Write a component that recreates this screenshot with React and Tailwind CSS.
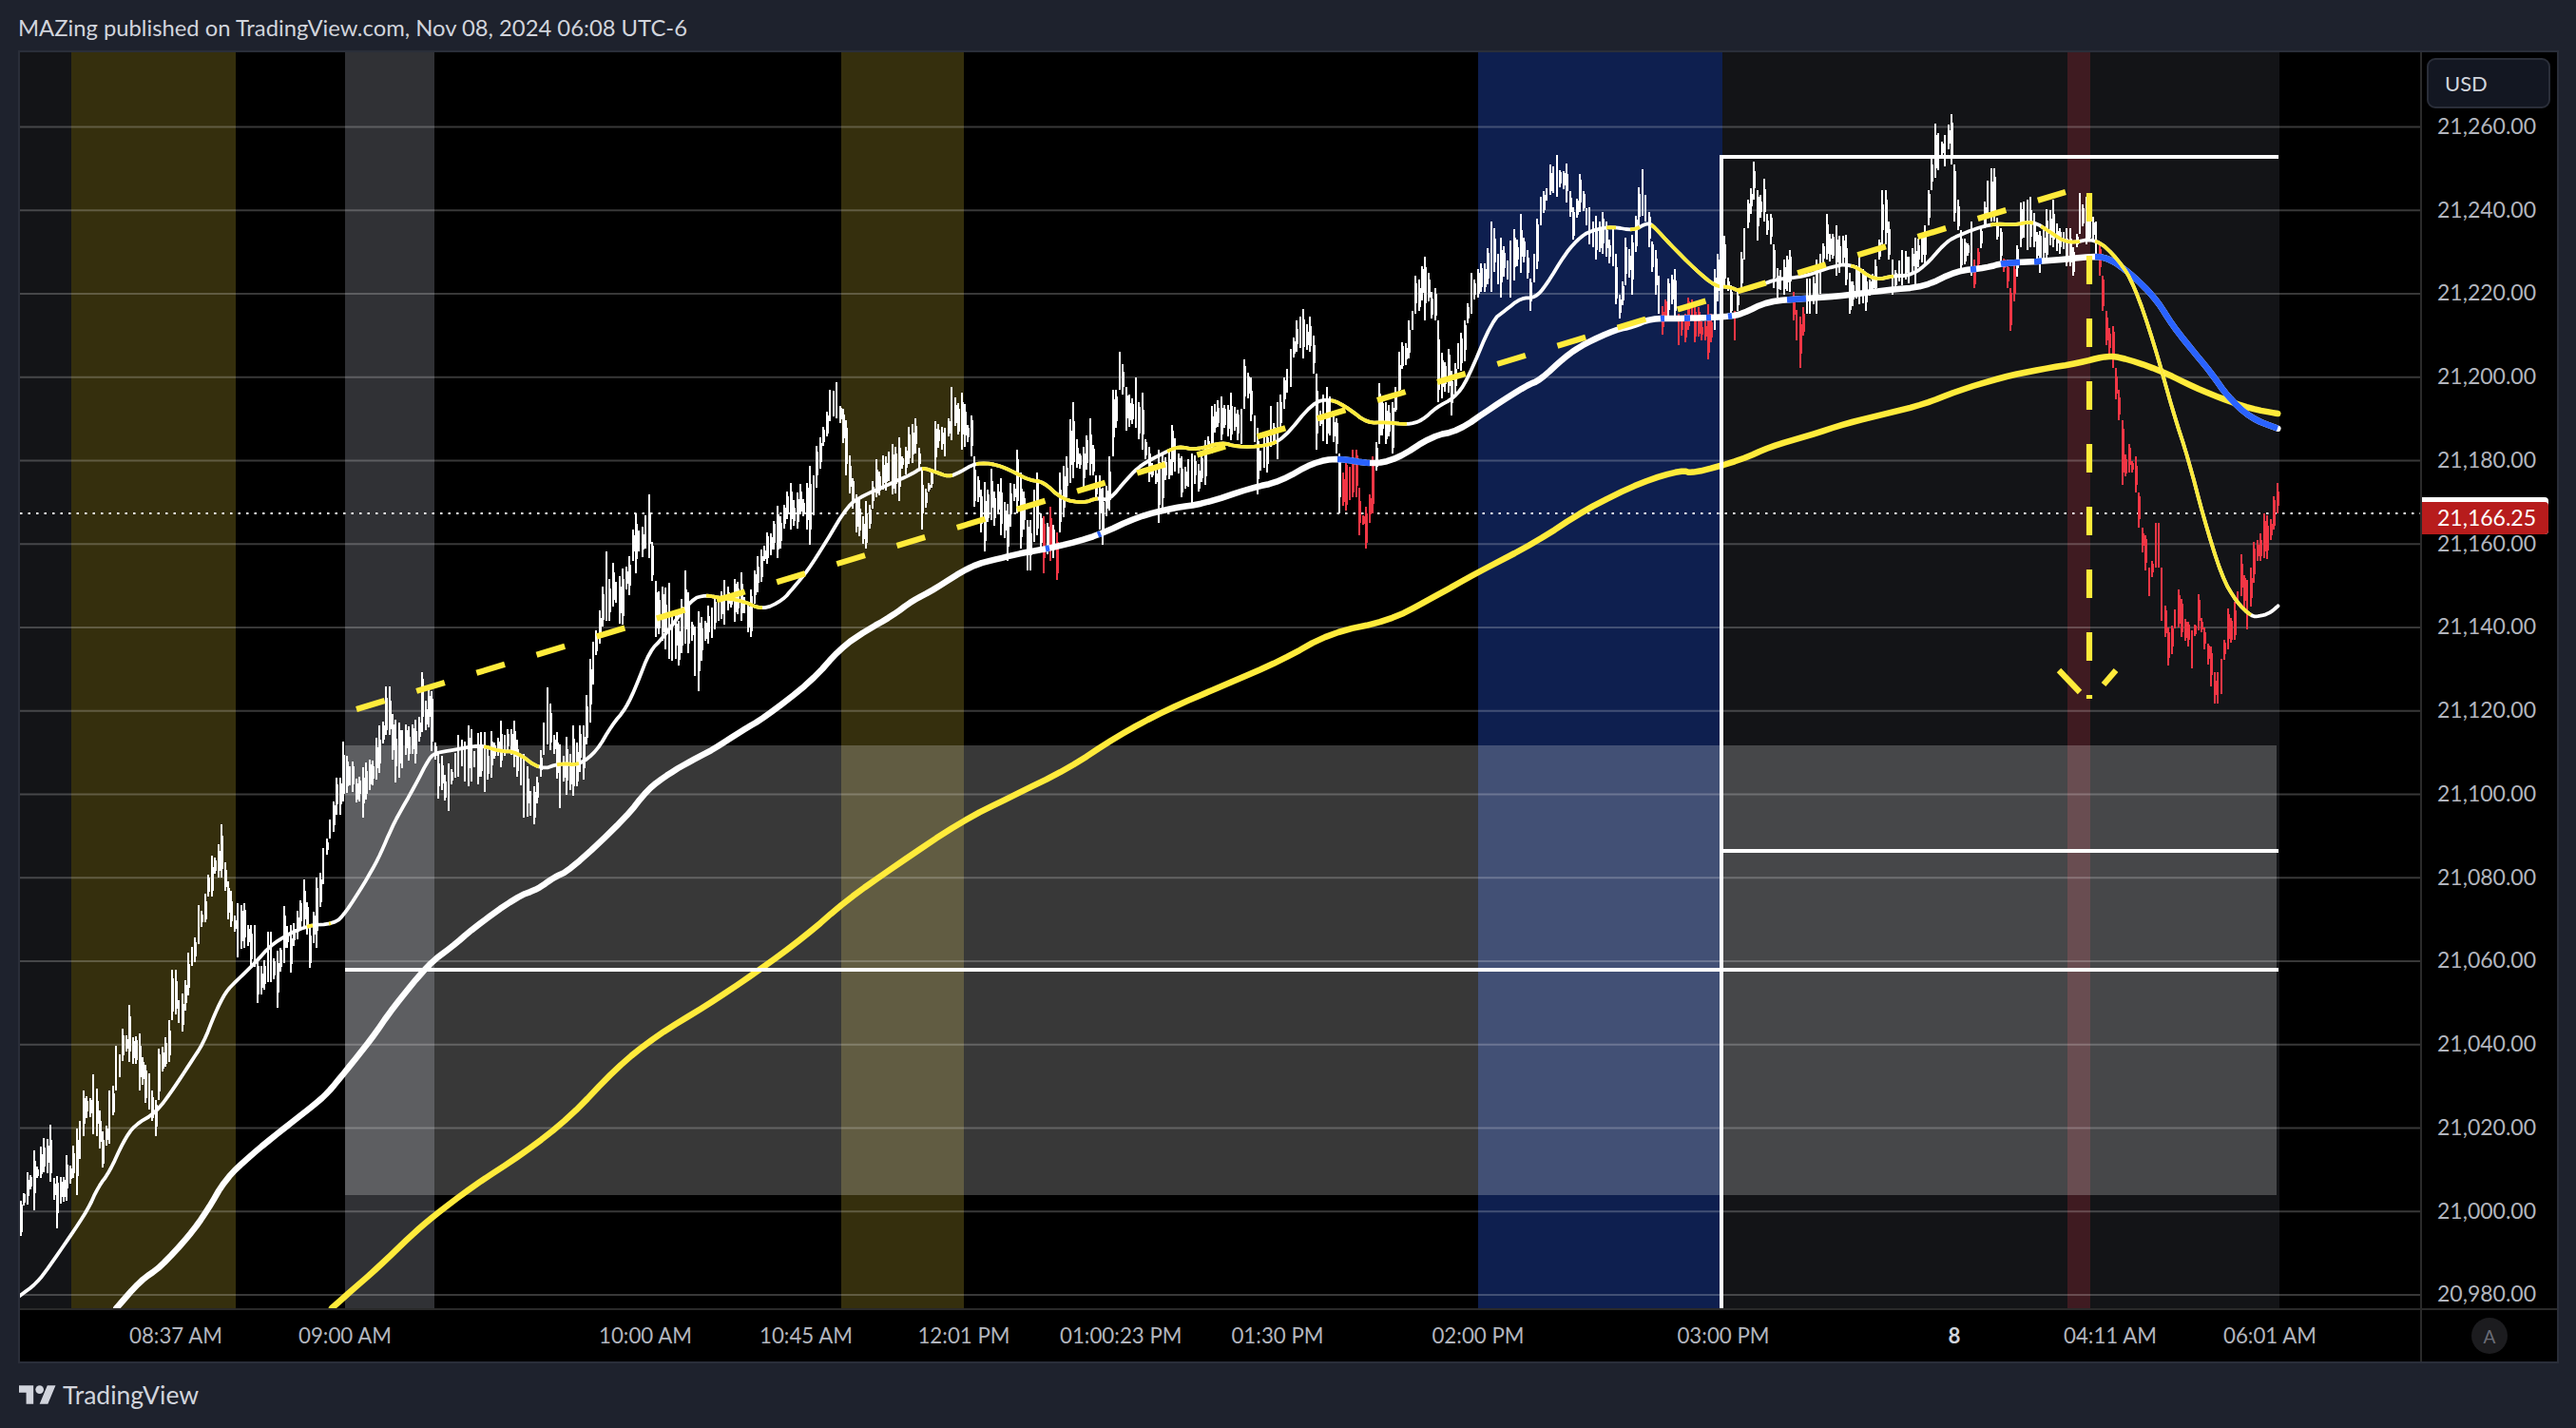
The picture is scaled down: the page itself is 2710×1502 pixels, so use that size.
import React from "react";

const map = (ox, oy, sx) => (rows) => rows.map(([a, ...ys]) => [ox + a / sx, ...ys.map((v) => oy + v / 3)]);
const z3 = map(0, 1300, 1.96), z7 = map(0, 800, 2.613), z8 = map(360, 360, 2.613), z9 = map(960, 130, 2.613), z10 = map(1500, 130, 3), z5 = map(1780, 100, 2.45), z6 = map(2100, 400, 2.57);
const d = (rows) => rows.map(([a, b]) => [a * 1.7283, b * 1.7283]);

const envelope = [
  ...z7([[55,1390,1500],[75,1300,1400],[95,1230,1420],[120,1190,1300],[135,1150,1330],[155,1310,1475],[185,1245,1390],[210,1160,1370],[230,1040,1185],[260,990,1180],[285,1170,1285],[300,1040,1210],[320,900,1040],[355,770,950],[380,860,1040],[405,960,1080],[425,1070,1185],[440,910,1050],[460,820,950],[478,660,800],[500,735,855],[520,605,740],[550,455,580],[565,420,510],[580,300,430],[610,200,370],[630,380,500],[650,450,620],[675,450,590],[695,520,650],[710,630,765],[740,540,700],[760,600,780],[780,460,640],[800,520,670],[833,375,530],[855,520,655],[875,370,590],[890,275,390],[915,130,225],[930,55,170]]),
  ...z8([[0,1260,1450],[60,1340,1500],[100,1210,1360],[125,1085,1240],[150,1190,1390],[200,1190,1330],[222,1040,1230],[245,1100,1290],[265,1290,1440],[290,1330,1480],[320,1240,1370],[350,1210,1400],[395,1230,1420],[440,1195,1340],[470,1195,1340],[500,1300,1500],[530,1400,1520],[565,1090,1270],[600,1270,1470],[635,1210,1430],[660,1210,1380],[680,1000,1200],[705,845,950],[730,660,880],[770,715,890],[805,540,730],[840,480,680],[865,760,930],[895,760,1000],[925,880,1020],[945,720,950],[975,850,1100],[1010,830,950],[1050,750,890],[1095,725,880],[1120,780,930],[1140,675,790],[1170,600,700],[1195,515,680],[1235,445,590],[1275,445,590],[1290,390,640],[1310,300,400],[1345,150,250],[1360,125,240],[1385,245,420],[1410,480,600],[1440,500,650],[1470,370,490],[1510,320,480],[1530,300,500]]),
  ...z9([[10,930,1040],[30,1140,1280],[50,1100,1150],[65,940,1080],[90,960,1050],[108,830,1000],[135,850,1030],[160,920,1050],[175,1050,1210],[195,1130,1350],[215,1090,1250],[240,1120,1300],[258,1200,1380],[285,1030,1230],[300,1100,1340],[320,1250,1410],[340,1100,1300],[360,1240,1420],[378,1210,1380],[395,1290,1440],[410,1100,1280],[440,880,1120],[465,1020,1150],[490,930,1110],[520,1150,1330],[540,1050,1220],[555,840,960],[572,720,840],[590,830,970],[610,800,960],[630,850,1030],[650,1020,1130],[680,1030,1260],[710,950,1110],[740,1050,1180],[770,1040,1200],[800,1000,1140],[820,890,1040],[850,860,1000],[880,850,1000],[900,900,1010],[915,745,860],[930,800,940],[950,960,1170],[975,970,1100],[985,890,1020],[1005,880,1060],[1020,800,900],[1040,710,830],[1055,620,720],[1075,585,740],[1090,610,720],[1105,670,790],[1115,840,1030],[1140,830,1010],[1165,930,1040],[1178,1040,1230],[1195,1060,1220],[1215,1030,1180],[1230,1150,1300],[1245,1210,1340],[1265,1050,1230],[1285,820,1010],[1300,880,1010],[1320,880,1040],[1340,720,860],[1360,620,740],[1385,480,600],[1410,420,620],[1435,520,620],[1450,710,880],[1470,710,850],[1485,780,920],[1505,660,780],[1520,620,750],[1535,470,600]]),
  ...z10([[180,440,530],[210,310,530],[240,360,550],[265,370,550],[296,285,470],[320,400,490],[330,490,590],[350,300,460],[365,230,320],[395,130,225],[415,100,230],[445,125,250],[465,265,365],[490,160,280],[515,265,380],[535,290,430],[560,280,410],[585,330,450],[600,410,570],[615,540,615],[630,360,510],[650,350,540],[675,200,320],[685,145,290],[700,280,390],[720,400,540],[735,480,600],[748,575,665],[765,490,620],[785,460,620],[800,600,700],[820,600,690],[830,550,650],[845,510,610],[850,580,690],[890,570,745],[905,600,690],[915,460,650],[925,410,560],[940,355,520],[965,510,610],[975,590,685],[1000,405,500],[1010,330,430],[1020,240,320],[1035,120,240],[1050,210,370],[1065,175,310],[1085,285,380],[1095,450,520],[1110,455,550],[1130,430,540],[1148,400,530],[1160,530,620],[1180,610,770],[1195,580,670]]),
  ...z5([[300,580,690],[320,520,690],[350,375,520],[370,410,570],[395,440,600],[410,560,690],[430,500,660],[450,560,680],[470,520,620],[495,300,470],[505,400,520],[520,530,630],[545,490,600],[575,450,600],[600,410,540],[615,200,300],[630,90,260],[650,125,225],[665,60,220],[680,220,400],[695,440,560],[720,400,570],[732,520,610],[760,270,380],[775,230,400],[795,420,530],[810,520,610],[818,620,745],[830,520,650],[850,340,480],[860,330,490],[875,320,480],[895,430,560],[915,360,520],[930,330,480],[945,420,500],[970,420,540],[985,480,570],[1000,310,400],[1020,320,470],[1040,400,520],[1048,470,570],[1060,600,680],[1070,700,790],[1082,730,860],[1095,870,960],[1105,930,1030]]),
  ...z6([[330,30,125],[345,205,330],[360,200,290],[378,240,355],[385,375,465],[400,490,600],[415,590,680],[435,450,590],[450,640,760],[470,780,900],[490,660,780],[505,690,810],[525,790,910],[547,675,790],[560,780,850],[580,840,965],[595,920,1020],[610,880,990],[625,720,850],[640,700,820],[665,550,680],[680,630,785],[700,510,640],[720,420,560],[735,425,565],[750,365,470],[758,325,420],[766,420,435]]),
].sort((a, b) => a[0] - b[0]);

const redRanges = [[1097,1099],[1104,1106],[1111,1113],[1410,1446],[1747,1753],[1765,1802],[1823,1827],[1886,1900],[2077,2081],[2108,2121],[2207,2400]];

function buildCandles() {
  let s = 12345;
  const rnd = () => { s = (s * 1664525 + 1013904223) >>> 0; return s / 4294967296; };
  const out = { wW: "", wR: "", bW: "", bR: "" };
  let j = 0, pHi = null, pLo = null;
  for (let x = 22; x <= 2396; x += 3.46) {
    while (j < envelope.length - 2 && envelope[j + 1][0] < x) j++;
    const [x0, t0, b0] = envelope[j], [x1, t1, b1] = envelope[j + 1];
    const f = Math.max(0, Math.min(1, (x - x0) / Math.max(0.01, x1 - x0)));
    const t = t0 + (t1 - t0) * f, b = b0 + (b1 - b0) * f, span = b - t;
    const nearNode = Math.abs(x - x0) < 1.8 || Math.abs(x - x1) < 1.8;
    const node = Math.abs(x - x0) < Math.abs(x - x1) ? envelope[j] : envelope[j + 1];
    let hi = nearNode ? node[1] : t + rnd() * span * 0.4;
    let lo = nearNode ? node[2] : b - rnd() * span * 0.4;
    if (pHi !== null) {
      if (hi > pLo) hi = pLo;
      if (lo < pHi) lo = pHi;
    }
    pHi = hi; pLo = lo;
    const a = hi + (lo - hi) * (0.1 + rnd() * 0.2), c = lo - (lo - hi) * (0.1 + rnd() * 0.2);
    const red = redRanges.some(([p, q]) => x >= p && x <= q);
    const X = Math.round(x);
    const wick = `M${X} ${hi.toFixed(0)}V${lo.toFixed(0)}`, body = `M${X + 0.5} ${a.toFixed(0)}V${c.toFixed(0)}`;
    if (red) { out.wR += wick; if (rnd() < 0.8) out.bR += body; } else { out.wW += wick; if (rnd() < 0.8) out.bW += body; }
  }
  return out;
}
const candles = buildCandles();

const fast = [
  ...z3([[40,190],[75,150],[100,100],[145,0]]),
  ...z7([[240,1420],[270,1345],[300,1300],[340,1200],[370,1150],[430,1110],[480,1030],[520,960],[560,890],[590,800],[620,730],[650,695],[700,640],[750,575],[840,520],[920,515],[950,480],[1000,390],[1040,310],[1070,230]]),
  ...z8([[150,1500],[200,1400],[240,1310],[260,1295],[300,1288],[380,1270],[430,1290],[480,1292],[545,1350],[600,1328],[650,1335],[700,1290],[740,1210],[780,1155],[810,1080],[845,975],[880,935],[960,810],[1000,798],[1030,805],[1100,815],[1155,845],[1210,815],[1240,775],[1280,720],[1330,630],[1390,515],[1430,485],[1500,450],[1568,415]]),
  ...z9([[25,1085],[60,1098],[100,1115],[130,1100],[175,1070],[230,1075],[280,1100],[320,1125],[360,1130],[410,1185],[470,1198],[510,1180],[540,1190],[590,1120],[630,1075],[690,1040],[730,1018],[780,1030],[850,1005],[890,1020],[970,1018],[1020,995],[1100,880],[1150,868],[1200,900],[1250,945],[1300,942],[1360,950],[1400,938],[1440,895],[1490,865],[1525,810]]),
  ...z10([[210,620],[250,590],[300,550],[345,550],[380,510],[440,410],[490,355],[530,335],[590,325],[655,338],[700,312],[720,325],[770,380],[850,460],[915,515],[960,515],[990,530],[1060,508]]),
  ...z5([[220,580],[290,573],[350,545],[410,530],[470,585],[520,570],[560,570],[600,540],[650,470],[680,445],[770,405],[830,410],[880,398],[920,430],[970,470],[1040,450],[1100,520],[1140,600],[1190,780],[1240,1000]]),
  ...z6([[520,250],[560,430],[610,620],[650,700],[690,745],[710,745],[740,735],[762,712]]),
];

const slow = [
  ...z3([[240,228],[290,140],[330,100],[390,0]]),
  ...z7([[570,1420],[620,1320],[690,1245],[770,1170],[860,1090],[900,1050],[950,980],[1020,880],[1080,780],[1180,640],[1240,590],[1300,530],[1420,430],[1480,405],[1520,370],[1568,345]]),
  ...z8([[780,1500],[840,1410],[900,1360],[960,1320],[1020,1285],[1100,1225],[1160,1185],[1290,1070],[1370,965],[1440,910],[1510,865],[1568,815]]),
  ...z9([[60,1470],[160,1395],[240,1372],[300,1355],[400,1335],[510,1300],[620,1240],[720,1212],[800,1200],[930,1150],[1010,1130],[1100,1070],[1170,1055],[1260,1075],[1330,1060],[1430,985],[1500,970]]),
  ...z10([[210,895],[320,825],[360,810],[440,735],[500,695],[600,650],[650,640],[710,615],[800,615],[950,610],[1000,600],[1080,560],[1200,552]]),
  ...z5([[400,632],[500,615],[600,605],[680,555],[760,545],[800,530],[900,525],[1040,508],[1070,515],[1100,535],[1150,585],[1200,650],[1240,730],[1300,820],[1340,880],[1380,950],[1440,1020],[1510,1052]]),
];

const ma200 = [
  [349,1376],[367,1360],[398,1333],[432,1300],[455,1280],[497,1248],[551,1213],[600,1175],
  ...d([[375,650],[400,630],[430,612],[460,592],[490,570],[515,548],[545,527],[585,500],[615,485],[650,468],[680,448],[710,432],[745,417],[780,402],[810,385],[845,378],[870,365],[900,348],[935,330],[965,310],[1000,293],[1024,286]]),
  ...z5([[0,1195],[130,1150],[200,1110],[300,1075],[400,1035],[500,1005],[600,975],[680,935],[800,890],[900,865],[1000,845],[1060,825],[1100,825],[1200,865],[1300,925],[1360,955],[1440,990],[1510,1005]]),
];

const smooth = (pts, n = 2) => {
  let cur = pts.filter((p, i) => i === 0 || p[0] > pts[i - 1][0]);
  for (let k = 0; k < n; k++) {
    const next = [cur[0]];
    for (let i = 0; i < cur.length - 1; i++) {
      const [a, b] = cur[i], [c, e] = cur[i + 1];
      next.push([a * 0.75 + c * 0.25, b * 0.75 + e * 0.25], [a * 0.25 + c * 0.75, b * 0.25 + e * 0.75]);
    }
    next.push(cur[cur.length - 1]);
    cur = next;
  }
  return cur;
};
const fastPts = smooth(fast), slowPts = smooth(slow), ma200Pts = smooth(ma200);

const toPath = (pts) => pts.map((p, i) => `${i ? "L" : "M"}${p[0].toFixed(1)} ${p[1].toFixed(1)}`).join("");
const yAt = (pts, x) => {
  for (let i = 0; i < pts.length - 1; i++) {
    if (x >= pts[i][0] && x <= pts[i + 1][0] && pts[i + 1][0] > pts[i][0]) {
      const f = (x - pts[i][0]) / (pts[i + 1][0] - pts[i][0]);
      return pts[i][1] + (pts[i + 1][1] - pts[i][1]) * f;
    }
  }
  return pts[pts.length - 1][1];
};
const slice = (pts, a, b) => toPath([[a, yAt(pts, a)], ...pts.filter((p) => p[0] > a && p[0] < b), [b, yAt(pts, b)]]);

const fastYellow = [[323,329],[346,348],[509,567],[586,609],[743,802],[970,1002],[1027,1155],[1228,1343],[1400,1480],[1690,1700],[1715,1725],[1737,1830],[1947,1992],[2094,2139],[2147,2188],[2204,2368]];
const slowBlue = [[1100,1104],[1155,1158],[1407,1441],[1747,1751],[1772,1778],[1795,1800],[1818,1822],[1880,1900],[2073,2079],[2105,2125],[2140,2148],[2204,2396]];

const gridY = Array.from({ length: 15 }, (_, i) => 133.5 + i * 87.75);
const prices = ["21,260.00","21,240.00","21,220.00","21,200.00","21,180.00","21,160.00","21,140.00","21,120.00","21,100.00","21,080.00","21,060.00","21,040.00","21,020.00","21,000.00","20,980.00"];

function Chart() {
  return (
    <svg className="block w-[2525px] h-[1321px] bg-black" viewBox="21 55 2525 1321">
      <rect x="21" y="55" width="54" height="1321" fill="#131417" />
      <rect x="75" y="55" width="173" height="1321" fill="#352f0d" />
      <rect x="363" y="55" width="94" height="1321" fill="#303135" />
      <rect x="885" y="55" width="129" height="1321" fill="#352f0d" />
      <rect x="1555" y="55" width="257" height="1321" fill="#0e1f4f" />
      <rect x="1812" y="55" width="586" height="1321" fill="#131417" />
      <rect x="2175" y="55" width="24" height="1321" fill="#3f1b21" />
      {gridY.map((y) => (
        <rect key={y} x="21" y={y - 1} width="2525" height="2" fill="#ffffff" fillOpacity="0.22" />
      ))}
      <rect x="363" y="784" width="2032" height="473" fill="#ffffff" fillOpacity="0.22" />
      <line x1="21" y1="540" x2="2546" y2="540" stroke="#fff" strokeWidth="2" strokeDasharray="2.5 6" />
      <g fill="none" shapeRendering="crispEdges">
        <path d={candles.wW} stroke="#fff" strokeWidth="2" />
        <path d={candles.bW} stroke="#fff" strokeWidth="3" />
        <path d={candles.wR} stroke="#f23645" strokeWidth="2" />
        <path d={candles.bR} stroke="#f23645" strokeWidth="3" />
      </g>
      <g fill="none" strokeLinejoin="round" strokeLinecap="round">
        <path d={toPath(ma200Pts)} stroke="#ffeb3b" strokeWidth="6.5" />
        <path d={toPath(slowPts)} stroke="#fff" strokeWidth="6.5" />
        {slowBlue.map(([a, b]) => <path key={a} d={slice(slowPts, a, b)} stroke="#2962ff" strokeWidth="6.5" strokeLinecap="butt" />)}
        <path d={toPath(fastPts)} stroke="#fff" strokeWidth="3.8" />
        {fastYellow.map(([a, b]) => <path key={a} d={slice(fastPts, a, b)} stroke="#ffeb3b" strokeWidth="3.8" strokeLinecap="butt" />)}
      </g>
      <g stroke="#fff" strokeWidth="4" fill="none">
        <path d="M1810 165H2397" />
        <path d="M1810 895H2397" />
        <path d="M363 1020H2397" />
        <path d="M1811 163V1376" />
      </g>
      <g stroke="#ffeb3b" strokeWidth="6.2" fill="none">
        <line x1="375" y1="746" x2="2173" y2="202" strokeDasharray="31 35" />
        <line x1="2198" y1="203" x2="2198" y2="735" strokeDasharray="30 36" />
        <line x1="2166" y1="705" x2="2188" y2="728" />
        <line x1="2213" y1="720" x2="2226" y2="705" />
      </g>
    </svg>
  );
}

function PriceAxis() {
  return (
    <div className="relative w-[144px] h-[1321px] bg-black border-l-2 border-[#2a2a2a] overflow-hidden">
      <div className="pt-[33.6px]">
        {prices.map((p) => (
          <div key={p} className="h-[87.75px] flex items-center pl-[16px] text-[23px] leading-none text-[#b2b5be]">{p}</div>
        ))}
      </div>
      <div className="absolute left-[5px] top-[6px] w-[130px] h-[53px] rounded-[9px] border-2 border-[#2a2e39] bg-[#131722] flex items-center pl-[17px] text-[22px] text-[#d1d4dc]">USD</div>
      <div className="absolute left-0 top-[468px] w-[133px] pt-[5px] rounded-r-[4px] bg-white">
        <div className="h-[34px] pb-[2px] rounded-r-[4px] bg-[#b71c1c] flex items-center pl-[16px] text-[23px] leading-none text-white">21,166.25</div>
      </div>
    </div>
  );
}

function TimeAxis() {
  const cell = "w-[120px] shrink-0 text-center whitespace-nowrap";
  return (
    <div className="flex items-stretch h-[56px] border-t-2 border-[#2a2a2a] bg-black">
      <div className="w-[2525px] flex items-center text-[22.3px] leading-none text-[#b2b5be]">
        <span className={`${cell} ml-[104px]`}>08:37 AM</span>
        <span className={`${cell} ml-[58px]`}>09:00 AM</span>
        <span className={`${cell} ml-[196px]`}>10:00 AM</span>
        <span className={`${cell} ml-[49px]`}>10:45 AM</span>
        <span className={`${cell} ml-[46px]`}>12:01 PM</span>
        <span className={`${cell} ml-[41px]`}>01:00:23 PM</span>
        <span className={`${cell} ml-[49px]`}>01:30 PM</span>
        <span className={`${cell} ml-[91px]`}>02:00 PM</span>
        <span className={`${cell} ml-[138px]`}>03:00 PM</span>
        <span className={`${cell} ml-[123px] font-bold text-[#d1d4dc]`}>8</span>
        <span className={`${cell} ml-[44px]`}>04:11 AM</span>
        <span className={`${cell} ml-[48px]`}>06:01 AM</span>
      </div>
      <div className="w-[144px] border-l-2 border-[#2a2a2a] flex items-center justify-center">
        <div className="w-[38px] h-[38px] rounded-full bg-[#1c1c1f] flex items-center justify-center text-[19px] leading-none text-[#6a6d78]">A</div>
      </div>
    </div>
  );
}

export default function App() {
  return (
    <div className="w-[2710px] h-[1502px] overflow-hidden bg-[#1e222d] font-['Lato','Liberation_Sans',sans-serif]">
      <div className="h-[53px] pl-[19px] flex items-center text-[23.8px] leading-none text-[#d1d4dc] pt-[6px]">
        MAZing published on TradingView.com, Nov 08, 2024 06:08 UTC-6
      </div>
      <div className="ml-[19px] w-[2673px] border-2 border-[#2a2e39]">
        <div className="flex">
          <Chart />
          <PriceAxis />
        </div>
        <TimeAxis />
      </div>
      <div className="flex items-center gap-[7px] pl-[20px] mt-[20px] text-[#d1d4dc]">
        <svg className="w-[39px] h-[20px]" viewBox="0 4 36 18" fill="currentColor">
          <path d="M14 22H7V11H0V4h14v18zM28 22h-8l7.5-18h8L28 22z" />
          <circle cx="20" cy="8" r="4" />
        </svg>
        <span className="text-[26.5px] leading-none">TradingView</span>
      </div>
    </div>
  );
}
